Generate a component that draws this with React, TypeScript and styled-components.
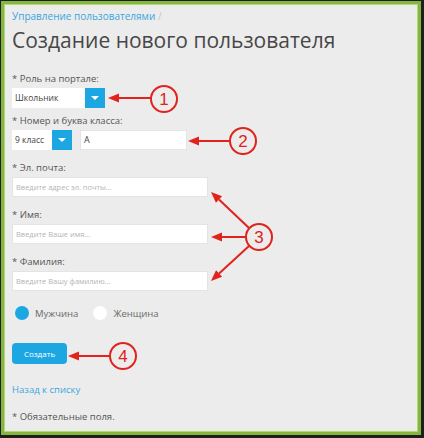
import styled, { createGlobalStyle } from "styled-components";

const GlobalStyle = createGlobalStyle`
  html, body {
    margin: 0;
    padding: 0;
    background: #1e1e1e;
  }
  * {
    box-sizing: border-box;
  }
`;

const FONT = `"Open Sans", "Noto Sans", sans-serif`;
const BLUE = "#1ca7e3";
const RED = "#e0231c";

const Frame = styled.div`
  position: relative;
  width: 424px;
  height: 438px;
  padding: 1px 3px 3px 1px;
  background: #1e1e1e;
`;

const Panel = styled.div`
  height: 100%;
  border: 3px solid #84b640;
  box-shadow: inset 0 0 0 1px #b0d875;
  background: #ececec;
  padding: 5px 8px 0 8px;
  font-family: ${FONT};
  color: #555;
`;

const Breadcrumb = styled.div`
  font-size: 10px;
  line-height: 14px;
  color: #3aa6dc;

  span {
    color: #b9c9d3;
  }
`;

const Title = styled.h1`
  margin: 3px 0 0;
  font-size: 21px;
  line-height: 28px;
  font-weight: 400;
  color: #474747;
`;

const Field = styled.div<{ $top: number }>`
  margin-top: ${(p) => p.$top}px;
`;

const Label = styled.div`
  font-size: 9.5px;
  line-height: 14px;
  color: #555;
  margin-bottom: 2px;
`;

const Row = styled.div`
  display: flex;
  gap: 8px;
`;

const Select = styled.div<{ $w: number }>`
  display: flex;
  width: ${(p) => p.$w}px;
  height: 20px;
  background: #fff;
`;

const SelectValue = styled.div`
  flex: 1;
  font-size: 8.5px;
  line-height: 20px;
  padding-left: 3px;
  color: #444;
`;

const SelectButton = styled.div`
  width: 20px;
  height: 20px;
  background: ${BLUE};
  display: flex;
  align-items: center;
  justify-content: center;

  &::after {
    content: "";
    border-left: 4px solid transparent;
    border-right: 4px solid transparent;
    border-top: 4px solid #fff;
  }
`;

const Input = styled.div<{ $w: number; $placeholder?: boolean }>`
  width: ${(p) => p.$w}px;
  height: 20px;
  background: #fff;
  border: 1px solid #e4e4e4;
  font-size: ${(p) => (p.$placeholder ? 7.5 : 9)}px;
  line-height: 18px;
  padding-left: 3px;
  color: ${(p) => (p.$placeholder ? "#b4b4b4" : "#444")};
`;

const Radios = styled.div`
  display: flex;
  align-items: center;
  gap: 15px;
  margin-top: 14px;
  padding-left: 3px;
  height: 16px;
`;

const Radio = styled.label`
  display: flex;
  align-items: center;
  gap: 6px;
  font-size: 9.5px;
  color: #6a6a6a;
`;

const Dot = styled.span<{ $on?: boolean }>`
  width: 14px;
  height: 14px;
  border-radius: 50%;
  background: ${(p) => (p.$on ? BLUE : "#fff")};
`;

const Button = styled.button`
  display: block;
  margin-top: 22px;
  width: 55px;
  height: 21px;
  border: none;
  border-radius: 4px;
  background: ${BLUE};
  color: #fff;
  font-family: ${FONT};
  font-size: 8px;
  padding: 0;
`;

const BackLink = styled.a`
  display: block;
  margin-top: 19px;
  font-size: 9.5px;
  line-height: 14px;
  color: #3aa6dc;
`;

const Note = styled.div`
  margin-top: 13px;
  font-size: 9.5px;
  line-height: 14px;
  color: #555;
`;

const Overlay = styled.svg`
  position: absolute;
  left: 0;
  top: 0;
  pointer-events: none;
`;

const Badge = ({ x, y, n }: { x: number; y: number; n: number }) => (
  <g>
    <circle cx={x} cy={y} r={13} fill="none" stroke={RED} strokeWidth={2} />
    <text
      x={x}
      y={y + 6}
      textAnchor="middle"
      fontFamily="'Liberation Sans', Arial, sans-serif"
      fontSize={17}
      fill={RED}
    >
      {n}
    </text>
  </g>
);

const Arrow = ({ x1, y1, x2, y2 }: { x1: number; y1: number; x2: number; y2: number }) => {
  const a = Math.atan2(y2 - y1, x2 - x1);
  const len = 11;
  const w = 4.5;
  const bx = x2 - len * Math.cos(a);
  const by = y2 - len * Math.sin(a);
  const px = -Math.sin(a) * w;
  const py = Math.cos(a) * w;
  return (
    <g>
      <line x1={x1} y1={y1} x2={bx} y2={by} stroke={RED} strokeWidth={2} />
      <polygon
        points={`${x2},${y2} ${bx + px},${by + py} ${bx - px},${by - py}`}
        fill={RED}
      />
    </g>
  );
};

export default function App() {
  return (
    <Frame>
      <GlobalStyle />
      <Panel>
        <Breadcrumb>
          Управление пользователями <span>/</span>
        </Breadcrumb>
        <Title>Создание нового пользователя</Title>

        <Field $top={18}>
          <Label>* Роль на портале:</Label>
          <Select $w={93}>
            <SelectValue>Школьник</SelectValue>
            <SelectButton />
          </Select>
        </Field>

        <Field $top={6}>
          <Label>* Номер и буква класса:</Label>
          <Row>
            <Select $w={60}>
              <SelectValue>9 класс</SelectValue>
              <SelectButton />
            </Select>
            <Input $w={107}>A</Input>
          </Row>
        </Field>

        <Field $top={11}>
          <Label>* Эл. почта:</Label>
          <Input $w={196} $placeholder>
            Введите адрес эл. почты...
          </Input>
        </Field>

        <Field $top={11}>
          <Label>* Имя:</Label>
          <Input $w={196} $placeholder>
            Введите Ваше имя...
          </Input>
        </Field>

        <Field $top={11}>
          <Label>* Фамилия:</Label>
          <Input $w={196} $placeholder>
            Введите Вашу фамилию...
          </Input>
        </Field>

        <Radios>
          <Radio>
            <Dot $on />
            Мужчина
          </Radio>
          <Radio>
            <Dot />
            Женщина
          </Radio>
        </Radios>

        <Button>Создать</Button>
        <BackLink>Назад к списку</BackLink>
        <Note>* Обязательные поля.</Note>
      </Panel>

      <Overlay width={424} height={438} viewBox="0 0 424 438">
        <Arrow x1={151} y1={98} x2={108} y2={98} />
        <Badge x={164} y={99} n={1} />
        <Arrow x1={230} y1={141} x2={188} y2={141} />
        <Badge x={243} y={141} n={2} />
        <Arrow x1={249} y1={228} x2={211} y2={192} />
        <Arrow x1={246} y1={237} x2={211} y2={237} />
        <Arrow x1={249} y1={246} x2={211} y2={281} />
        <Badge x={259} y={237} n={3} />
        <Arrow x1={110} y1={356} x2={68} y2={356} />
        <Badge x={123} y={356} n={4} />
      </Overlay>
    </Frame>
  );
}
